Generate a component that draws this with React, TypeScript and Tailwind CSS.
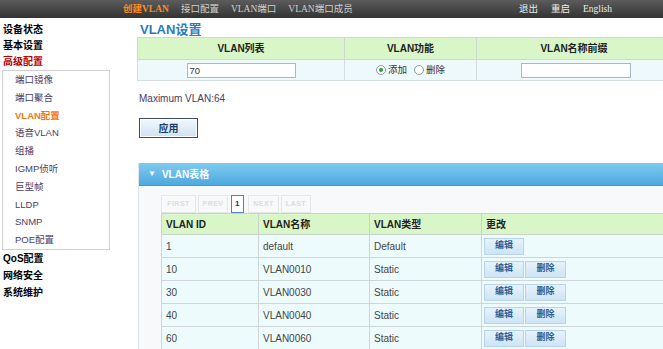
import React from 'react';

const NAV = ['创建VLAN', '接口配置', 'VLAN端口', 'VLAN端口成员'];
const SUB = ['端口镜像', '端口聚合', 'VLAN配置', '语音VLAN', '组播', 'IGMP侦听', '巨型帧', 'LLDP', 'SNMP', 'POE配置'];
const ROWS = [
  { id: '1', name: 'default', type: 'Default', del: false },
  { id: '10', name: 'VLAN0010', type: 'Static', del: true },
  { id: '30', name: 'VLAN0030', type: 'Static', del: true },
  { id: '40', name: 'VLAN0040', type: 'Static', del: true },
  { id: '60', name: 'VLAN0060', type: 'Static', del: true },
];

const Radio = ({ checked }: { checked?: boolean }) => (
  <span className="w-[10px] h-[10px] rounded-full border border-[#8a9aa8] bg-white flex items-center justify-center">
    {checked && <span className="w-[4px] h-[4px] rounded-full bg-[#2f9a3a]" />}
  </span>
);

const SmallBtn = ({ label, w }: { label: string; w: string }) => (
  <span className={`${w} h-[17px] flex items-center justify-center bg-gradient-to-b from-[#e6f2fb] to-[#cfe4f5] border border-[#b8d4ea] text-[9px] font-bold text-[#2a5f95]`}>
    {label}
  </span>
);

const App: React.FC = () => {
  return (
    <div className="w-[663px] h-[349px] overflow-hidden bg-white font-['Liberation_Sans','Noto_Sans_CJK_SC',sans-serif] text-[10px] text-[#222]">
      {/* Top bar */}
      <div className="h-[18px] flex items-center bg-gradient-to-b from-[#5c5c5c] to-[#333] font-['Liberation_Serif','Noto_Sans_CJK_SC',serif] text-[9.5px]">
        <div className="flex gap-[12px] pl-[123px]">
          {NAV.map((n, i) => (
            <span key={n} className={i === 0 ? 'text-[#ff8a1e] font-bold' : 'text-[#cfcfcf]'}>{n}</span>
          ))}
        </div>
        <div className="ml-auto flex gap-[13px] pr-[51px] text-[#eee]">
          <span>退出</span>
          <span>重启</span>
          <span>English</span>
        </div>
      </div>

      <div className="flex">
        {/* Sidebar */}
        <div className="w-[138px] shrink-0 pt-[4px]">
          {['设备状态', '基本设置'].map(t => (
            <div key={t} className="h-[16px] leading-[16px] pl-[3px] font-bold text-black">{t}</div>
          ))}
          <div className="h-[16px] leading-[16px] pl-[3px] font-bold text-[#b80000]">高级配置</div>
          <div className="ml-[2px] w-[108px] border border-[#cfcfcf]">
            {SUB.map(s => (
              <div
                key={s}
                className={`h-[17.8px] leading-[17.8px] pl-[12px] text-[9.5px] ${s === 'VLAN配置' ? 'text-[#f07818] font-bold' : 'text-[#4a3d66]'}`}
              >
                {s}
              </div>
            ))}
          </div>
          {['QoS配置', '网络安全', '系统维护'].map(t => (
            <div key={t} className="h-[17px] leading-[17px] pl-[3px] font-bold text-black">{t}</div>
          ))}
        </div>

        {/* Main */}
        <div className="w-[540px] shrink-0">
          <div className="h-[19px] leading-[23px] pl-[2px] text-[13px] font-bold text-[#2a7cbc]">VLAN设置</div>

          <table className="border-collapse w-[535px] -ml-[1px]">
            <tbody>
              <tr className="h-[22px] bg-[#d9f6c8] font-bold text-[10px] text-[#222]">
                <td className="w-[207px] border border-[#cfd8cf] text-center">VLAN列表</td>
                <td className="w-[132px] border border-[#cfd8cf] text-center">VLAN功能</td>
                <td className="border border-[#cfd8cf] text-center">VLAN名称前缀</td>
              </tr>
              <tr className="h-[21px] bg-[#eef9fc]">
                <td className="border border-[#d6dde0]">
                  <div className="flex justify-center">
                    <div className="w-[109px] h-[15px] border border-[#a9b7c2] bg-white text-[9.5px] leading-[13px] pl-[2px] text-[#333]">70</div>
                  </div>
                </td>
                <td className="border border-[#d6dde0]">
                  <div className="flex items-center justify-center gap-[2px] text-[9.5px] text-[#333]">
                    <Radio checked />
                    <span>添加</span>
                    <span className="w-[3px]" />
                    <Radio />
                    <span>删除</span>
                  </div>
                </td>
                <td className="border border-[#d6dde0]">
                  <div className="flex justify-center pl-[4px]">
                    <div className="w-[110px] h-[15px] border border-[#a9b7c2] bg-white" />
                  </div>
                </td>
              </tr>
            </tbody>
          </table>

          <div className="mt-[12px] h-[11px] leading-[11px] pl-[1px] text-[10px] text-[#4d3a5e]">Maximum VLAN:64</div>

          <div className="mt-[14px] ml-[1px] w-[59px] h-[20px] border border-[#3e4d5c] bg-gradient-to-b from-[#f2f8fd] to-[#cfe2f2] flex items-center justify-center text-[10px] font-bold text-[#1d3d6a] shadow-[inset_0_0_0_1px_#fff]">
            应用
          </div>

          {/* Panel */}
          <div className="mt-[25px] w-[540px] bg-[#f7f9fb] border-l border-[#dde5eb] h-[200px]">
            <div className="h-[23px] flex items-center gap-[6px] pl-[9px] bg-gradient-to-b from-[#7fcbf0] to-[#4da9de] border-b border-[#3f9bd2] text-white font-bold text-[10px]">
              <span className="text-[8px]">▼</span>
              <span>VLAN表格</span>
            </div>
            <div className="pl-[22px] pt-[9px]">
              <div className="h-[18px] flex gap-[2px] text-[7px] font-bold text-[#dcdcdc] tracking-[0.5px]">
                <span className="w-[35px] border border-[#e6e6e6] flex items-center justify-center">FIRST</span>
                <span className="w-[30px] border border-[#e6e6e6] flex items-center justify-center">PREV</span>
                <span className="w-[13px] ml-[1px] mr-[2px] border border-[#5a7db4] bg-white text-[#333] flex items-center justify-center text-[8px]">1</span>
                <span className="w-[31px] border border-[#e6e6e6] flex items-center justify-center">NEXT</span>
                <span className="w-[30px] border border-[#e6e6e6] flex items-center justify-center">LAST</span>
              </div>
              <table className="border-collapse w-[520px]">
                <tbody>
                  <tr className="h-[21px] bg-[#d9f6c8] font-bold text-[10px] text-[#222]">
                    <td className="w-[97px] border border-[#c9d3c9] pl-[4px]">VLAN ID</td>
                    <td className="w-[111px] border border-[#c9d3c9] pl-[4px]">VLAN名称</td>
                    <td className="w-[112px] border border-[#c9d3c9] pl-[4px]">VLAN类型</td>
                    <td className="border border-[#c9d3c9] pl-[4px]">更改</td>
                  </tr>
                  {ROWS.map(r => (
                    <tr key={r.id} className="h-[23px] bg-[#eefbfc] text-[10px] text-[#444]">
                      <td className="border border-[#cdd5d8] pl-[4px]">{r.id}</td>
                      <td className="border border-[#cdd5d8] pl-[4px]">{r.name}</td>
                      <td className="border border-[#cdd5d8] pl-[4px]">{r.type}</td>
                      <td className="border border-[#cdd5d8] pl-[2px]">
                        <div className="flex gap-[1px]">
                          <SmallBtn label="编辑" w="w-[40px]" />
                          {r.del && <SmallBtn label="删除" w="w-[41px]" />}
                        </div>
                      </td>
                    </tr>
                  ))}
                </tbody>
              </table>
            </div>
          </div>
        </div>
      </div>
    </div>
  );
};

export default App;
